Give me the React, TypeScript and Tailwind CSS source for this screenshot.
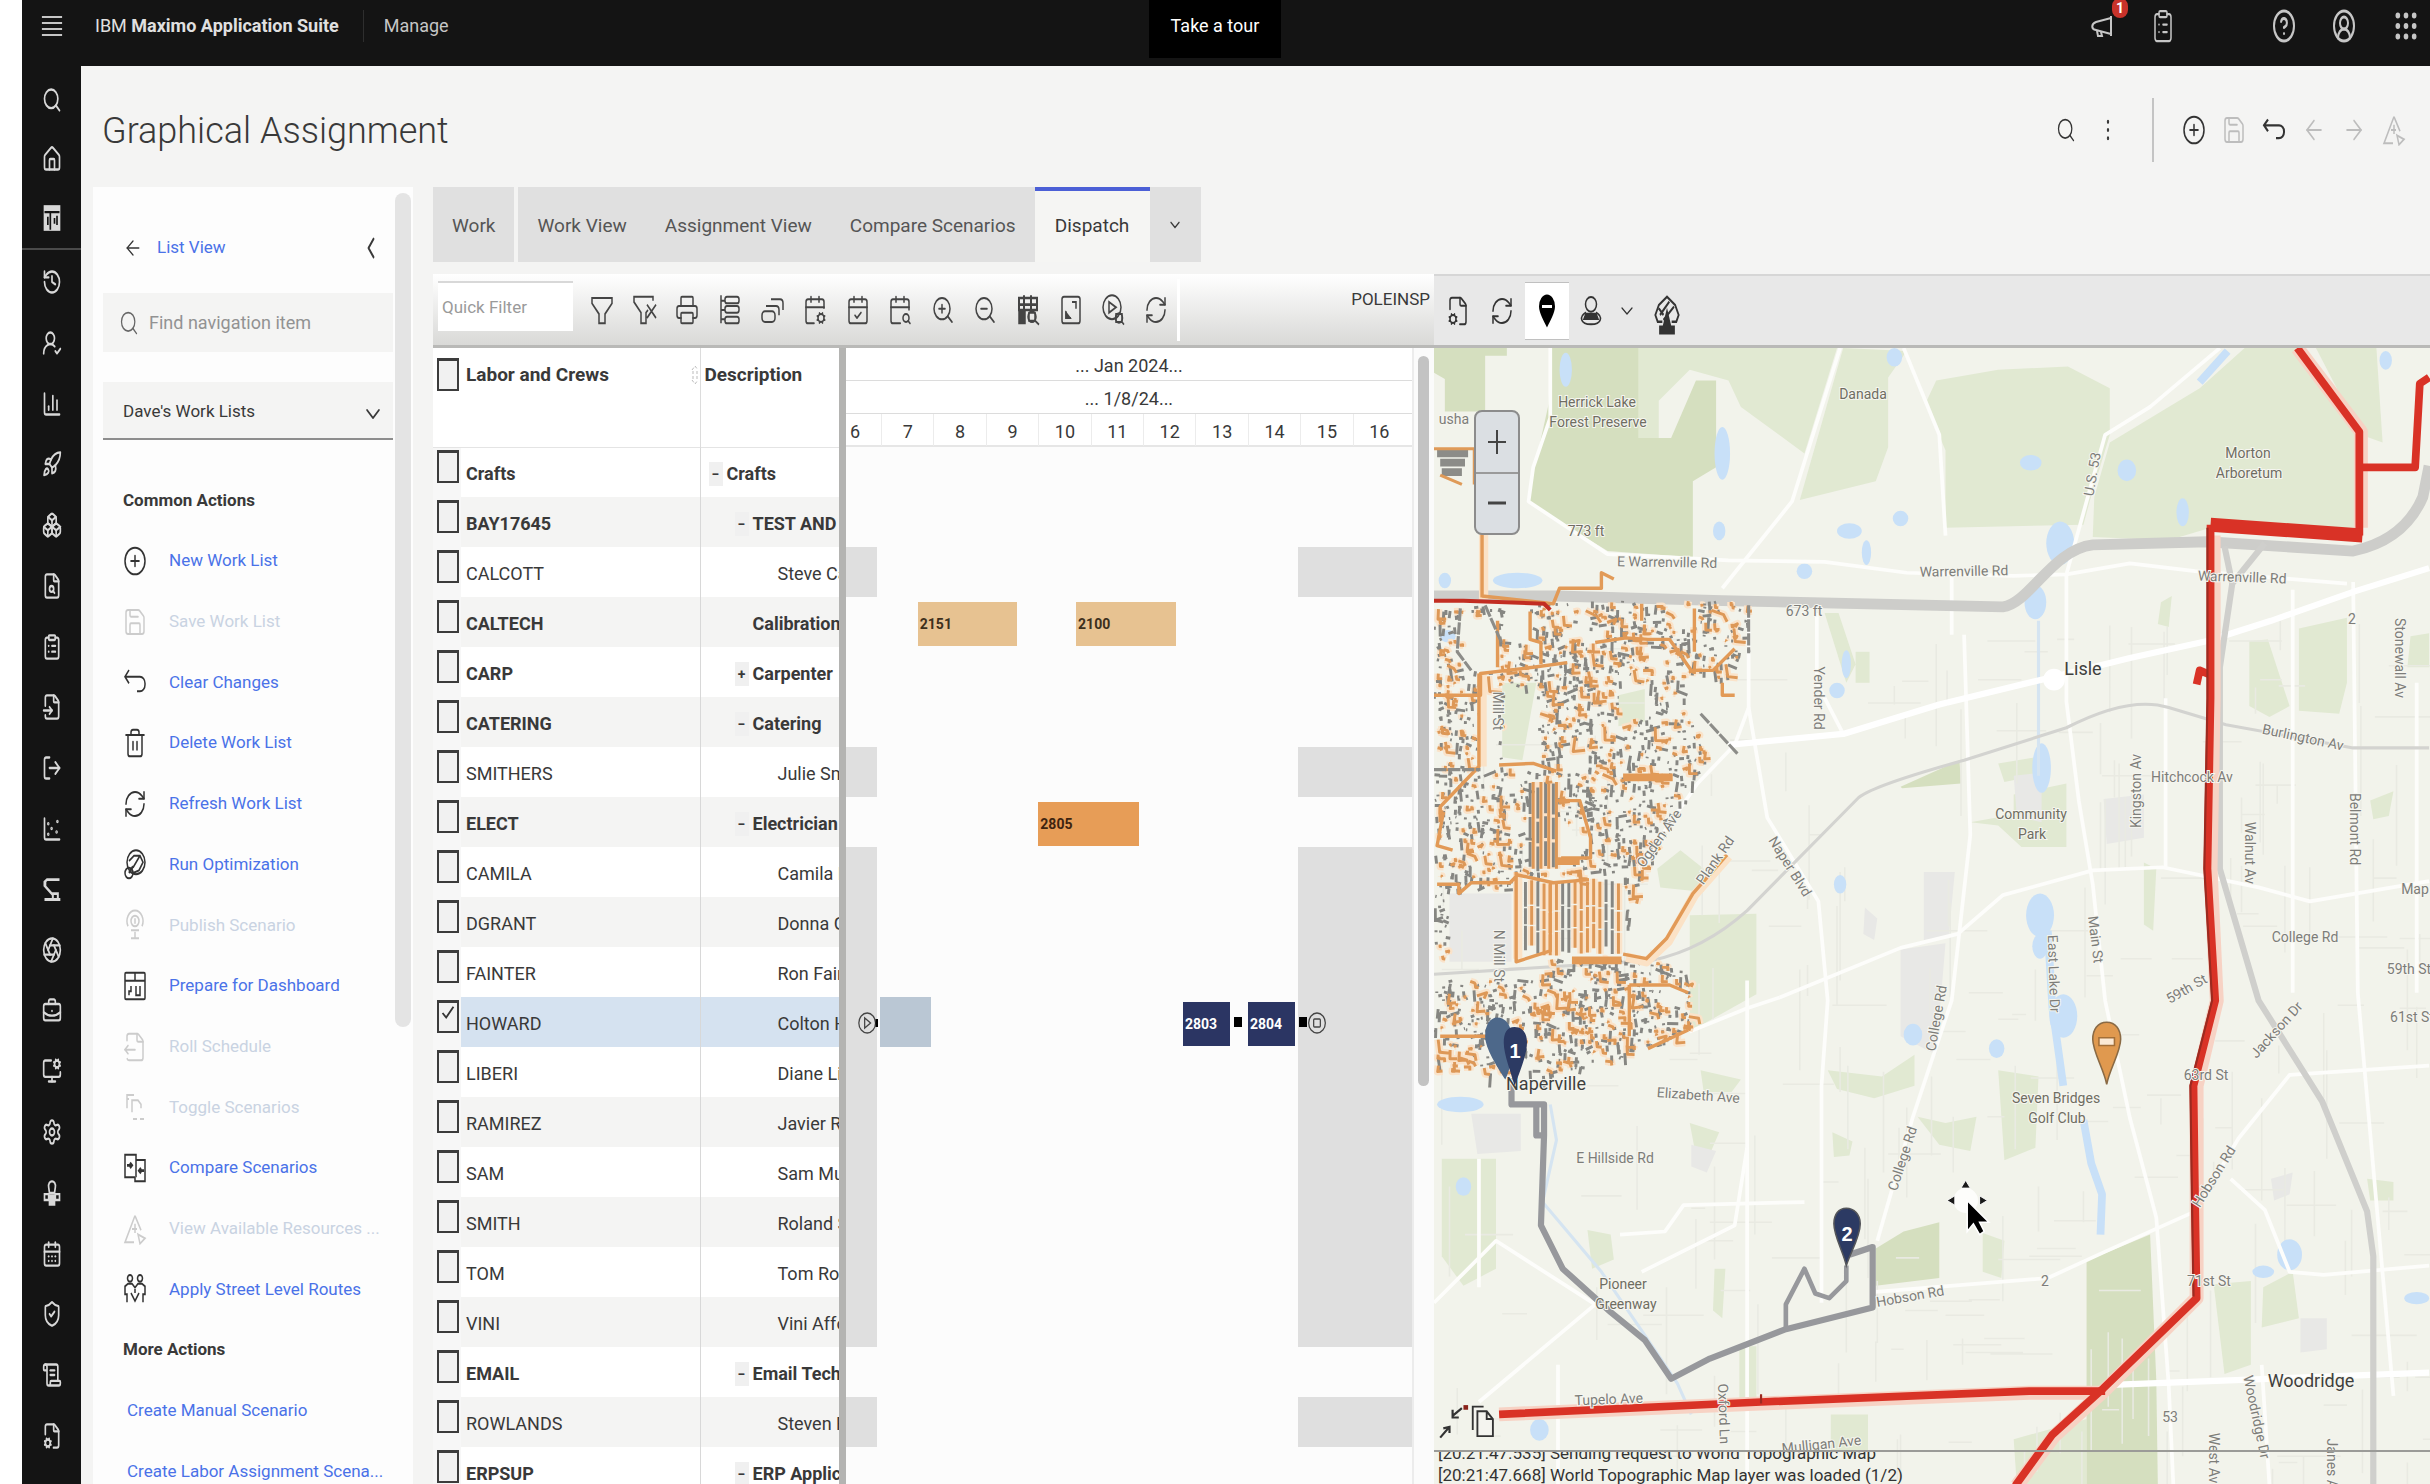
import { useState } from 'react';
import type { FC, ReactNode } from 'react';
import {
  Aperture, ArrowLeft, ArrowRight, Boxes, BriefcaseBusiness, CalendarCheck, CalendarCog, CalendarDays, CalendarSearch,
  ChartColumn, ChartScatter, ChevronDown, ChevronLeft, CirclePlus, CircleQuestionMark, CircleUserRound, ClipboardList,
  EllipsisVertical, FileCog, FileInput, FileOutput, FileSearch, Grip, History, House, LogOut,
  MonitorCog, Printer, RefreshCw, Rocket, Save, ScrollText, Search, Settings, ShieldCheck, Trash2,
  UserRoundCheck, ZoomIn, ZoomOut,
} from 'lucide-react';
import type { LucideIcon } from 'lucide-react';

interface IconProps {
  className?: string;
  strokeWidth?: number;
}

type AnyIcon = LucideIcon | FC<IconProps>;

const Glyph: FC<{ children: ReactNode; className?: string; strokeWidth?: number }> = ({ children, className, strokeWidth = 1.5 }) => (
  <svg viewBox="0 0 24 24" preserveAspectRatio="none" fill="none" stroke="currentColor" strokeWidth={strokeWidth} className={className} aria-hidden="true">
    {children}
  </svg>
);

const Sheet: FC<{ icon: AnyIcon; className: string; strokeWidth?: number }> = ({ icon, className, strokeWidth = 1.5 }) => {
  const Drawn = icon as LucideIcon;
  return <Drawn preserveAspectRatio="none" strokeWidth={strokeWidth} className={className} aria-hidden="true" />;
};

const Bars: FC<IconProps> = (p) => (
  <Glyph {...p}>
    <path d="M1 3h22M1 9h22M1 15h22M1 21h22" />
  </Glyph>
);

const Horn: FC<IconProps> = (p) => (
  <Glyph {...p}>
    <path d="M21 2v20M21 4L6 8c-5 2-5 7 0 8l15 4M7 17l1 5h4l-1-4" />
  </Glyph>
);

const Undo: FC<IconProps> = (p) => (
  <Glyph {...p}>
    <path d="M6 3L2 8l4 5M2 8h15a5 5 0 0 1 5 5v1a5 5 0 0 1-5 5h-3" />
  </Glyph>
);

const Filter: FC<IconProps> = (p) => (
  <Glyph {...p}>
    <path d="M2 3h20v4l-7 8v7H9v-7L2 7z" />
  </Glyph>
);

const FilterClear: FC<IconProps> = (p) => (
  <Glyph {...p}>
    <path d="M20 5V2H1v4l7 8v8h5v-8l2-2M14 8l9 10M23 8l-9 10" />
  </Glyph>
);

const DashTable: FC<IconProps> = (p) => (
  <Glyph {...p}>
    <rect x="3" y="2" width="18" height="20" fill="currentColor" />
    <path d="M3 7h18M10 7v15M15 12v5M7 11v7M18 10v8" stroke="#141414" />
  </Glyph>
);

const RobotArm: FC<IconProps> = (p) => (
  <Glyph {...p}>
    <path d="M21 4H6L3 6v3l10 8M3 21h19M13 20v-4h6v4M4 6v4" strokeWidth="2.4" />
  </Glyph>
);

const CloudUser: FC<IconProps> = (p) => (
  <Glyph {...p}>
    <path d="M12 2a4 4 0 0 0-4 5l1 5h6l1-5a4 4 0 0 0-4-5zM3 13h5v5H3zM16 13h5v5h-5z" />
    <path d="M9 14h6v8H9z" fill="currentColor" />
  </Glyph>
);

const RowTree: FC<IconProps> = (p) => (
  <Glyph {...p}>
    <path d="M3 1v21M3 5h4M3 12h4M3 19h4" />
    <rect x="7" y="2" width="14" height="5" rx="2" />
    <rect x="7" y="9" width="14" height="5" rx="2" />
    <rect x="7" y="17" width="14" height="5" rx="2" />
  </Glyph>
);

const Stack: FC<IconProps> = (p) => (
  <Glyph {...p}>
    <rect x="1" y="13" width="13" height="8" rx="3" />
    <path d="M5 9h10q3 0 3 3v4M10 4h9q3 0 3 3v5" />
  </Glyph>
);

const CalendarZoom: FC<IconProps> = (p) => (
  <Glyph {...p}>
    <path d="M3 3h18v9H3zM3 8h18M8 1v11M15 1v11" strokeWidth="2" />
    <path d="M3 12h6v10H3z" fill="currentColor" />
    <circle cx="16" cy="17" r="4" />
    <path d="M13 14h6v6h-6zM19 20l4 3" />
  </Glyph>
);

const FitView: FC<IconProps> = (p) => (
  <Glyph {...p}>
    <rect x="3" y="2" width="18" height="20" rx="2" />
    <path d="M13 6h4v5M7 13v5h5" />
    <path d="M7 14v4h4z" fill="currentColor" />
  </Glyph>
);

const PlaySearch: FC<IconProps> = (p) => (
  <Glyph {...p}>
    <circle cx="11" cy="10" r="9" />
    <path d="M8 6v8l7-4z" />
    <circle cx="18" cy="18" r="3.5" />
    <path d="M15 15h6v6h-6zM20 20l3 3" />
  </Glyph>
);

const Optimize: FC<IconProps> = (p) => (
  <Glyph {...p}>
    <circle cx="13" cy="10" r="9" />
    <path d="M6 9l5-4h6l3 5-4 6-6 2M17 5l-7 9" />
    <circle cx="6" cy="18" r="4" />
    <path d="M6 18l4-5" strokeWidth="2" />
  </Glyph>
);

const Publish: FC<IconProps> = (p) => (
  <Glyph {...p}>
    <path d="M12 22v-5M8 22h8M5 13a8 8 0 1 1 14 0" />
    <circle cx="12" cy="9" r="4" />
    <path d="M8 16h8M12 7v4" />
  </Glyph>
);

const Dashboard: FC<IconProps> = (p) => (
  <Glyph {...p}>
    <rect x="2" y="2" width="20" height="20" rx="1" />
    <path d="M2 8h20M12 2v6M8 12v4H6v3M13 12v7h4v-7" />
  </Glyph>
);

const Toggle: FC<IconProps> = (p) => (
  <Glyph {...p}>
    <path d="M4 13V3h7M9 16V7h6l3 3v3M10 21h4M17 21h4M4 6h2" />
  </Glyph>
);

const Compare: FC<IconProps> = (p) => (
  <Glyph {...p}>
    <path d="M12 19H2V2h11v17M13 6h9v16H12v-3" />
    <path d="M4 10h5M7 8l2 2-2 2M21 14h-5M18 12l-2 2 2 2" strokeWidth="2" />
  </Glyph>
);

const Resources: FC<IconProps> = (p) => (
  <Glyph {...p}>
    <path d="M12 2L2 22h9M12 2l6 11M12 8v7M15 16l7 3-5 4zM9 12h5" />
  </Glyph>
);

const Routes: FC<IconProps> = (p) => (
  <Glyph {...p}>
    <circle cx="7" cy="4" r="2.5" />
    <circle cx="17" cy="4" r="2.5" />
    <path d="M4 22v-6H2v-6l3-2h4l3 3 3-3h4l3 2v6h-2v6M8 15l4 6 4-6M12 12v3" />
  </Glyph>
);

const PinSolid: FC<IconProps> = (p) => (
  <Glyph {...p}>
    <path d="M12 1a8 8 0 0 0-8 8c0 4 5 10 8 14 3-4 8-10 8-14a8 8 0 0 0-8-8z" fill="currentColor" stroke="none" />
    <path d="M7 8h10v2H7z" fill="#fff" stroke="none" />
  </Glyph>
);

const Person: FC<IconProps> = (p) => (
  <Glyph {...p}>
    <circle cx="12" cy="7" r="5.5" />
    <path d="M7 13c-7 3-6 9 5 9s12-6 5-9" />
    <path d="M7 14h10l2 4H5z" fill="currentColor" />
  </Glyph>
);

const Tower: FC<IconProps> = (p) => (
  <Glyph {...p}>
    <path d="M8 16H4l-2-4 3-6 7-5 7 5 3 6-2 4h-4M6 12l8-8M9 15l9-8M5 8l4 4" />
    <path d="M12 10l3 9h3v4H6v-4h3z" fill="currentColor" />
  </Glyph>
);

const railTop: AnyIcon[] = [Search, House, DashTable];
const railMain: AnyIcon[] = [
  History, UserRoundCheck, ChartColumn, Rocket, Boxes, FileSearch, ClipboardList, FileInput, LogOut, ChartScatter,
  RobotArm, Aperture, BriefcaseBusiness, MonitorCog, Settings, CloudUser, CalendarDays, ShieldCheck, ScrollText, FileCog,
];

interface Action {
  label: string;
  icon: AnyIcon;
  disabled?: boolean;
}

const commonActions: Action[] = [
  { label: 'New Work List', icon: CirclePlus },
  { label: 'Save Work List', icon: Save, disabled: true },
  { label: 'Clear Changes', icon: Undo },
  { label: 'Delete Work List', icon: Trash2 },
  { label: 'Refresh Work List', icon: RefreshCw },
  { label: 'Run Optimization', icon: Optimize },
  { label: 'Publish Scenario', icon: Publish, disabled: true },
  { label: 'Prepare for Dashboard', icon: Dashboard },
  { label: 'Roll Schedule', icon: FileOutput, disabled: true },
  { label: 'Toggle Scenarios', icon: Toggle, disabled: true },
  { label: 'Compare Scenarios', icon: Compare },
  { label: 'View Available Resources ...', icon: Resources, disabled: true },
  { label: 'Apply Street Level Routes', icon: Routes },
];

const tabs = ['Work', 'Work View', 'Assignment View', 'Compare Scenarios', 'Dispatch'];

const ganttTools: { label: string; icon: AnyIcon }[] = [
  { label: 'Filter', icon: Filter },
  { label: 'Clear filter', icon: FilterClear },
  { label: 'Print', icon: Printer },
  { label: 'Rows', icon: RowTree },
  { label: 'Stack', icon: Stack },
  { label: 'Calendar settings', icon: CalendarCog },
  { label: 'Calendar check', icon: CalendarCheck },
  { label: 'Calendar search', icon: CalendarSearch },
  { label: 'Zoom in', icon: ZoomIn },
  { label: 'Zoom out', icon: ZoomOut },
  { label: 'Zoom to dates', icon: CalendarZoom },
  { label: 'Fit', icon: FitView },
  { label: 'Find task', icon: PlaySearch },
  { label: 'Refresh', icon: RefreshCw },
];

interface Bar {
  id: string;
  from: number;
  to: number;
  tone: 'sand' | 'orange' | 'navy';
}

interface Resource {
  name: string;
  description: string;
  level: 0 | 1 | 2;
  toggle?: '−' | '+';
  bars?: Bar[];
}

const resources: Resource[] = [
  { name: 'Crafts', description: 'Crafts', level: 0, toggle: '−' },
  { name: 'BAY17645', description: 'TEST AND', level: 1, toggle: '−' },
  { name: 'CALCOTT', description: 'Steve Calcott', level: 2 },
  {
    name: 'CALTECH', description: 'Calibration', level: 1,
    bars: [{ id: '2151', from: 7.7, to: 9.6, tone: 'sand' }, { id: '2100', from: 10.72, to: 12.63, tone: 'sand' }],
  },
  { name: 'CARP', description: 'Carpenter', level: 1, toggle: '+' },
  { name: 'CATERING', description: 'Catering', level: 1, toggle: '−' },
  { name: 'SMITHERS', description: 'Julie Smithers', level: 2 },
  { name: 'ELECT', description: 'Electrician', level: 1, toggle: '−', bars: [{ id: '2805', from: 10, to: 11.92, tone: 'orange' }] },
  { name: 'CAMILA', description: 'Camila H', level: 2 },
  { name: 'DGRANT', description: 'Donna Grant', level: 2 },
  { name: 'FAINTER', description: 'Ron Fainter', level: 2 },
  {
    name: 'HOWARD', description: 'Colton Howard', level: 2,
    bars: [{ id: '2803', from: 12.76, to: 13.66, tone: 'navy' }, { id: '2804', from: 14, to: 14.9, tone: 'navy' }],
  },
  { name: 'LIBERI', description: 'Diane Liberi', level: 2 },
  { name: 'RAMIREZ', description: 'Javier Ramirez', level: 2 },
  { name: 'SAM', description: 'Sam Murphy', level: 2 },
  { name: 'SMITH', description: 'Roland Smith', level: 2 },
  { name: 'TOM', description: 'Tom Rowe', level: 2 },
  { name: 'VINI', description: 'Vini Affonso', level: 2 },
  { name: 'EMAIL', description: 'Email Technician', level: 1, toggle: '−' },
  { name: 'ROWLANDS', description: 'Steven Rowlands', level: 2 },
  { name: 'ERPSUP', description: 'ERP Application', level: 1, toggle: '−' },
];

const hours = [7, 8, 9, 10, 11, 12, 13, 14, 15, 16];
const FIRST_HOUR = 6.33;
const HOUR_SPAN = 10.8;
const hourLeft = (h: number): string => `${((h - FIRST_HOUR) / HOUR_SPAN) * 100}%`;
const hourWidth = (from: number, to: number): string => `${((to - from) / HOUR_SPAN) * 100}%`;

const barTone: Record<Bar['tone'], string> = {
  sand: 'bg-[#e7c291] text-[#3d2f1c]',
  orange: 'bg-[#e79d57] text-[#3d2410]',
  navy: 'bg-[#2b3563] text-white',
};

const indent: Record<Resource['level'], string> = { 0: 'pl-2', 1: 'pl-[34px]', 2: 'pl-[77px]' };

// ---- map drawing ----

const MAP_X = 926;
const MAP_Y = 224;
const MAP_SCALE = 1.55;

const network: [number, number][] = [
  [926, 391], [1000, 389], [1040, 385], [1130, 388], [1130, 418], [1112, 440], [1095, 432], [1085, 440], [1094, 470], [1104, 488],
  [1092, 505], [1086, 525], [1070, 548], [1056, 575], [1048, 612], [1055, 620], [1091, 622], [1091, 664], [1060, 680], [1020, 690],
  [990, 695], [926, 688],
];

const holes: [number, number, number, number][] = [
  [943, 396, 24, 36], [970, 390, 16, 20], [956, 438, 12, 56], [970, 442, 23, 52], [1045, 440, 18, 22], [1008, 476, 16, 22],
  [934, 574, 44, 48], [1006, 532, 16, 22], [970, 500, 11, 12], [978, 564, 71, 54], [926, 618, 70, 14], [1072, 632, 14, 16], [972, 520, 12, 18],
  [986, 500, 20, 62], [926, 538, 14, 12], [1076, 388, 16, 16], [1064, 418, 12, 20],
];

const inside = (x: number, y: number): boolean => {
  let hit = false;
  for (let i = 0, j = network.length - 1; i < network.length; j = i++) {
    const [xi, yi] = network[i];
    const [xj, yj] = network[j];
    if (yi > y !== yj > y && x < ((xj - xi) * (y - yi)) / (yj - yi) + xi) hit = !hit;
  }
  return hit && !holes.some(([hx, hy, w, h]) => x > hx && x < hx + w && y > hy && y < hy + h);
};

const createRandom = (start: number) => {
  let seed = start;
  return (): number => {
    seed = (seed * 1664525 + 1013904223) % 4294967296;
    return seed / 4294967296;
  };
};

// each city block gets its own street direction and share of orange lines
const blockNoise = (x: number, y: number, salt: number): number => {
  const n = Math.sin(Math.floor(x / 13) * 127.1 + Math.floor(y / 15) * 311.7 + salt) * 43758.5453;
  return n - Math.floor(n);
};

const buildNetwork = (): { poles: string; lines: string } => {
  const random = createRandom(20240108);
  let poles = '';
  let lines = '';
  for (let y = 388; y < 694; y += 3.5) {
    for (let x = 927; x < 1132; x += 3.5) {
      const px = x + random() * 5 - 2;
      const py = y + random() * 5 - 2;
      const pick = random();
      const turn = random();
      const len = 0.8 + random() * random() * 8;
      if (!inside(px, py)) continue;
      const vertical = turn < 0.25 + blockNoise(px, py, 0) * 0.6;
      const tilt = (random() - 0.5) * len * 0.9;
      const dx = vertical ? tilt * 0.5 : len * 0.9;
      const dy = vertical ? len * 1.2 : tilt;
      const step = `M${px.toFixed(1)} ${py.toFixed(1)}l${dx.toFixed(1)} ${dy.toFixed(1)}`;
      const orange = 0.08 + blockNoise(px, py, 9) * 0.26;
      if (pick < orange) lines += `${step}l${(dy * 0.8).toFixed(1)} ${(dx * 0.6).toFixed(1)}`;
      else if (pick < 0.4 + blockNoise(px, py, 4) * 0.45) poles += step;
    }
  }
  for (let x = 981; x < 1047; x += 4) {
    const line = `M${x} ${566 + random() * 4}v${14 + random() * 6}m0 1v${10 + random() * 5}m0 1v${12 + random() * 4}`;
    if (random() < 0.42) lines += line;
    else poles += line;
  }
  for (let x = 988; x < 1005; x += 5) {
    poles += `M${x} ${504 + random() * 4}v20m0 2v14m0 2v16`;
    lines += `M${x + 2} 504v56`;
  }
  return { poles, lines };
};

const buildStreets = (): string => {
  const random = createRandom(77);
  let d = '';
  for (let i = 0; i < 260; i++) {
    const x = 930 + random() * 636;
    const y = 400 + random() * 550;
    const len = 12 + random() * 60;
    d += random() < 0.6 ? `M${x.toFixed(0)} ${y.toFixed(0)}v${len.toFixed(0)}` : `M${x.toFixed(0)} ${y.toFixed(0)}h${(len * 0.6).toFixed(0)}`;
  }
  return d;
};

const grid = buildNetwork();
const streets = buildStreets();

const parksDark = [
  '926,224 973,224 973,229 959,229 959,265 945,265 933,265 933,244 926,240',
  '1001,224 1058,224 1058,282 1079,282 1095,245 1108,245 1108,301 1093,310 1093,359 1038,355 986,323 1000,260',
  '1211,805 1229,794 1252,788 1252,824 1211,829',
  '1347,813 1388,796 1392,890 1393,958 1347,958',
  '1227,507 1265,490 1266,505 1228,508',
];

const parksLight = [
  '1058,224 1186,224 1165,292 1124,262 1116,245 1091,238 1071,258 1071,282 1058,282',
  '1190,224 1231,226 1219,243 1219,288 1211,310 1162,322',
  '1250,245 1290,238 1335,236 1362,250 1362,280 1349,323 1345,338 1256,340 1256,290 1243,260',
  '1449,224 1482,224 1523,277 1523,340 1427,340 1400,348 1351,346 1352,320 1362,285 1420,250',
  '1495,224 1534,224 1538,285 1524,280',
  '1091,590 1134,589 1134,641 1091,665',
  '931,747 966,747 966,818 945,829 931,810',
  '1178,395 1187,395 1198,428 1192,440',
  '1198,420 1207,420 1207,440 1198,440',
  '1272,530 1300,525 1300,512 1334,505 1334,546 1305,546 1290,532',
  '1290,492 1314,488 1314,500 1294,504',
  '1452,413 1464,412 1478,455 1465,462 1452,455',
  '1484,405 1515,398 1515,440 1510,460 1484,458',
  '1429,828 1453,826 1453,880 1436,886',
  '1461,830 1480,820 1484,850 1460,856',
  '1070,560 1085,548 1100,560 1100,575 1072,572',
  '970,440 992,440 983,490 970,488',
  '1045,448 1062,444 1062,465 1045,468',
  '1091,724 1110,730 1104,744 1094,740',
  '1107,818 1114,818 1112,850 1106,845',
  '1123,868 1134,868 1134,905 1123,905',
  '1025,793 1040,796 1042,812 1028,818',
  '1183,730 1196,736 1194,745 1184,746',
  '1280,795 1294,800 1292,824 1280,820',
  '1180,690 1215,694 1236,680 1236,700 1210,708 1186,702',
  '1238,720 1256,724 1276,720 1272,742 1252,738',
  '1290,690 1316,694 1314,740 1294,748',
  '1300,928 1347,915 1347,958 1302,958',
  '1182,912 1206,912 1206,935 1182,935',
  '1384,556 1392,560 1390,600 1384,596',
  '1528,760 1545,762 1545,774 1530,774',
  '1556,410 1568,408 1568,430 1554,430',
  '1530,516 1545,510 1542,526 1532,528',
  '1098,690 1124,696 1118,704 1100,704',
  '1395,388 1402,384 1400,404 1393,402',
];

const blocks = [
  '1242,562 1262,562 1258,604 1242,606', '1227,612 1256,608 1250,680 1227,668', '936,576 976,576 976,620 936,620',
  '950,718 982,718 982,742 954,744', '1358,515 1384,512 1384,540 1360,544', '1092,738 1108,742 1102,756 1092,752',
  '1204,585 1212,592 1210,606 1203,602', '1300,500 1318,498 1318,530 1302,526', '1485,850 1502,850 1502,870 1485,872',
  '1466,760 1480,756 1478,770 1468,774',
];

const waters: [number, number, number, number][] = [
  [1011, 238, 4, 11], [1112, 292, 5, 17], [1223, 230, 5, 6], [1311, 298, 7, 5], [1373, 303, 6, 7], [1110, 342, 4, 6], [1165, 368, 5, 5],
  [1194, 342, 8, 5], [1205, 356, 3, 8], [1227, 334, 5, 5], [1330, 350, 9, 14], [1314, 388, 7, 11], [980, 374, 16, 5], [1318, 495, 6, 16],
  [1192, 428, 3, 9], [1186, 445, 5, 5], [1317, 590, 9, 14], [1317, 610, 5, 8], [1188, 570, 4, 6], [1235, 667, 6, 7], [1289, 676, 5, 6],
  [1332, 655, 9, 14], [1478, 809, 8, 10], [1461, 820, 7, 4], [1560, 837, 8, 4], [943, 712, 15, 5], [945, 765, 5, 6], [935, 410, 5, 4],
  [933, 374, 4, 5], [994, 922, 6, 7], [1540, 232, 4, 6], [1409, 330, 4, 9],
];

const roads = [
  'M1001 224V269L990 301L987 323L1038 357L1116 361L1178 362L1231 369L1300 371L1334 370L1375 363L1417 368L1515 376',
  'M1188 224L1157 323L1112 379',
  'M1229 224L1252 280L1256 345',
  'M1433 224L1388 262L1359 280L1347 323L1334 370V452L1342 516L1351 570L1359 645L1375 721L1392 785L1400 893L1403 958',
  'M1129 392V456L1120 480L1096 505L1058 560',
  'M1129 456L1141 527L1174 581L1180 645L1176 700V840',
  'M1149 643L1227 611L1264 602L1293 577L1351 561L1396 559L1458 572L1491 581L1568 568',
  'M1268 409L1272 538L1260 645L1235 720L1212 800',
  'M1519 375L1522 640L1545 900',
  'M1211 833L1322 824L1359 807L1417 781L1445 734L1478 693L1568 687',
  'M1165 775L1087 777L1075 794L1046 796',
  'M926 840L966 800L1030 841L955 904',
  'M1128 632V958',
  'M1173 395V440L1190 473',
  'M1480 380V640M1560 440V640M1398 450V560',
  'M1091 665L1128 650L1149 643',
  'M1440 760L1462 780L1478 820L1500 822L1568 816',
  'M1260 370V409M1060 820L1120 790L1128 740',
  'M955 747V830M1006 880V958M1460 880L1465 958',
];

interface MapLabel {
  text: string;
  x: number;
  y: number;
  rotate?: number;
  kind?: 'town' | 'park';
}

const mapLabels: MapLabel[] = [
  { text: 'Herrick Lake', x: 1031, y: 262, kind: 'park' },
  { text: 'Forest Preserve', x: 1032, y: 275, kind: 'park' },
  { text: 'Danada', x: 1203, y: 257, kind: 'park' },
  { text: 'Morton', x: 1451, y: 295, kind: 'park' },
  { text: 'Arboretum', x: 1452, y: 308, kind: 'park' },
  { text: 'usha', x: 939, y: 273 },
  { text: '773 ft', x: 1024, y: 345, kind: 'park' },
  { text: 'E Warrenville Rd', x: 1076, y: 365, rotate: 1 },
  { text: 'Warrenville Rd', x: 1268, y: 371, rotate: -1 },
  { text: 'Warrenville Rd', x: 1447, y: 375, rotate: 2 },
  { text: '673 ft', x: 1165, y: 397 },
  { text: 'Lisle', x: 1345, y: 435, kind: 'town' },
  { text: '2', x: 1518, y: 402 },
  { text: 'Burlington Av', x: 1486, y: 478, rotate: 12 },
  { text: 'Hitchcock Av', x: 1415, y: 504 },
  { text: 'Community', x: 1311, y: 528, kind: 'park' },
  { text: 'Park', x: 1312, y: 541, kind: 'park' },
  { text: 'College Rd', x: 1488, y: 607 },
  { text: '59th St', x: 1555, y: 628 },
  { text: '61st St', x: 1557, y: 659 },
  { text: 'Yender Rd', x: 1171, y: 450, rotate: 90 },
  { text: 'Mill St', x: 964, y: 458, rotate: 90 },
  { text: 'N Mill St', x: 965, y: 616, rotate: 90 },
  { text: 'Kingston Av', x: 1382, y: 510, rotate: -90 },
  { text: 'Walnut Av', x: 1449, y: 550, rotate: 90 },
  { text: 'Belmont Rd', x: 1517, y: 534, rotate: 90 },
  { text: 'Stonewall Av', x: 1546, y: 424, rotate: 90 },
  { text: 'Naper Blvd', x: 1153, y: 560, rotate: 58 },
  { text: 'Ogden Ave', x: 1074, y: 542, rotate: -55 },
  { text: 'Plank Rd', x: 1110, y: 556, rotate: -55 },
  { text: 'Main St', x: 1350, y: 606, rotate: 83 },
  { text: 'East Lake Dr', x: 1323, y: 628, rotate: 88 },
  { text: 'College Rd', x: 1253, y: 657, rotate: -80 },
  { text: 'College Rd', x: 1231, y: 748, rotate: -72 },
  { text: '59th St', x: 1413, y: 640, rotate: -30 },
  { text: 'Jackson Dr', x: 1472, y: 666, rotate: -48 },
  { text: '63rd St', x: 1424, y: 696 },
  { text: 'Hobson Rd', x: 1432, y: 760, rotate: -58 },
  { text: '71st St', x: 1426, y: 829 },
  { text: 'Hobson Rd', x: 1234, y: 839, rotate: -10 },
  { text: '2', x: 1320, y: 829 },
  { text: 'U.S. 53', x: 1354, y: 306, rotate: -80 },
  { text: 'Map', x: 1559, y: 576 },
  { text: 'Seven Bridges', x: 1327, y: 711, kind: 'park' },
  { text: 'Golf Club', x: 1328, y: 724, kind: 'park' },
  { text: 'Elizabeth Ave', x: 1096, y: 709, rotate: 4 },
  { text: 'E Hillside Rd', x: 1043, y: 750 },
  { text: 'Pioneer', x: 1048, y: 831, kind: 'park' },
  { text: 'Greenway', x: 1050, y: 844, kind: 'park' },
  { text: 'Tupelo Ave', x: 1039, y: 905, rotate: -2 },
  { text: 'Naperville', x: 998, y: 703, kind: 'town' },
  { text: 'Woodridge', x: 1492, y: 894, kind: 'town' },
  { text: '53', x: 1401, y: 917 },
  { text: 'Woodridge Dr', x: 1454, y: 914, rotate: 78 },
  { text: 'Janes Av', x: 1502, y: 946, rotate: 90 },
  { text: 'West Av', x: 1426, y: 940, rotate: 90 },
  { text: 'Oxford Ln', x: 1110, y: 912, rotate: 88 },
  { text: 'Mulligan Ave', x: 1176, y: 934, rotate: -6 },
];

const DispatchMap: FC = () => (
  <svg viewBox="0 0 996 1136" preserveAspectRatio="xMinYMin slice" className="block h-full w-full" role="img" aria-label="Dispatch map">
    <rect width="996" height="1136" fill="#f2f3eb" />
    <g transform={`scale(${MAP_SCALE}) translate(${-MAP_X} ${-MAP_Y})`} fill="none" strokeLinejoin="round">
      {parksLight.map((points) => <polygon key={points} points={points} fill="#e1e9d2" />)}
      {parksDark.map((points) => <polygon key={points} points={points} fill="#d5dfbf" />)}
      {blocks.map((points) => <polygon key={points} points={points} fill="#e8e8e6" />)}
      <path d={streets} stroke="#e9eae2" strokeWidth="1" />
      {waters.map(([x, y, rx, ry]) => <ellipse key={`${x}-${y}`} cx={x} cy={y} rx={rx} ry={ry} fill="#c8e0f8" />)}
      <path d="M1438 226L1420 246" stroke="#c8e0f8" strokeWidth="5" />
      <path d="M1345 722L1350 750L1357 770L1356 796M1322 600L1325 650L1332 700" stroke="#c8e0f8" strokeWidth="5" />
      <path d="M1316 400V500M1001 712L1005 735L996 775L1034 820L1058 855L1083 892L1092 912" stroke="#d5e4f1" strokeWidth="2" />

      {roads.map((d) => <path key={d} d={d} stroke="#fdfdfb" strokeWidth="2.4" />)}
      <path d="M1116 480L1190 473L1252 454L1322 437L1375 424L1425 413L1466 400L1520 381L1568 366M1363 893L1568 885" stroke="#fff" strokeWidth="4" />
      <circle cx="1326" cy="438" r="7" fill="#fff" />
      <path d="M926 628L1067 619Q1100 612 1128 587L1200 514Q1210 506 1268 490L1334 469Q1375 448 1400 456L1437 467L1519 482H1568" stroke="#d3d3d0" strokeWidth="2" />
      <path d="M926 384H1005L1112 387L1293 391C1310 389 1325 354 1351 351L1425 349L1519 355Q1552 348 1564 320L1568 300" stroke="#cdcdca" strokeWidth="7" />
      <path d="M1462 350L1441 376L1433 430V560L1458 645L1499 710L1528 781L1532 810V958M1436 352L1441 376" stroke="#cfcfcc" strokeWidth="4" />

      <path d={grid.lines} stroke="#fae3ca" strokeWidth="5" />
      <path d={grid.poles} stroke="#868682" strokeWidth="1.9" />
      <path d={grid.lines} stroke="#dd9857" strokeWidth="1.9" />
      <g stroke="#fbe2c6" strokeWidth="6">
        <path d="M1050 617L1063 620L1077 607L1094 577L1116 552M958 344V386M957 434V494M980 562V618" />
      </g>
      <g stroke="#e29a57" strokeWidth="2.2">
        <path d="M1048 615L1063 618L1076 605L1093 576L1115 551" />
        <path d="M957 344V385M957 384L1003 389L1007 379H1034V369L1042 373" />
        <path d="M926 448H956V434L990 430L1012 427M968 493L990 492L1005 497M955 434V494L930 520V530" />
        <path d="M928 570H942V576L950 569H975L980 564L1003 569L1026 567M979 562V620L1001 613V570" />
        <path d="M1005 516H1020L1027 540V553H1008M967 400V430M988 394V412L995 414V428" />
        <path d="M1030 414L1050 411L1064 412L1078 412L1092 432H1106L1120 418M1094 392V420M1060 389V400" />
        <path d="M1052 635H1078L1090 640M1052 635V668M1064 676L1090 664M930 668H975M932 524L928 545L938 548" />
        <path d="M1112 440V448H1120" />
      </g>
      <path d="M1015 619H1047M1048 501H1080M1005 555H1020" stroke="#e29a57" strokeWidth="5" />
      <path d="M943 392L941 420L950 432M959 390L970 415M1129 390V421M1098 460L1122 486M926 496H956" stroke="#8c8c88" strokeWidth="2" strokeDasharray="8 1" />
      <path d="M928 292H948M930 298H946M931 304H944" stroke="#8c8c88" strokeWidth="5" />
      <path d="M926 289H952V312M930 306L944 312" stroke="#df9a58" strokeWidth="2" />
      <path d="M926 387H945L997 389L1001 393" stroke="#c22d22" strokeWidth="2.6" />

      <path d="M976 695V712H997V732H992V714M997 732L995 790L1009 818L1040 846L1062 864L1079 889L1104 876L1153 857L1209 843V804L1194 809" stroke="#97989c" strokeWidth="4" />
      <path d="M1153 857V841L1165 818L1172 834L1181 837L1192 826V816" stroke="#97989c" strokeWidth="3" />

      <g stroke="#f7d2c4" strokeWidth="9">
        <path d="M1483 224L1524 278V340M1429 345V450L1427 560L1431 645L1418 700V837L1358 897L1326 926L1302 958M968 912L1137 905L1310 898H1359" />
      </g>
      <g stroke="#d93226" strokeWidth="5">
        <path d="M1483 224L1523 278V345M1427 338V450L1425 560L1430 645L1416 700L1417 773L1418 837L1358 895L1325 925L1301 958" />
        <path d="M1525 301H1559L1562 247L1568 243" />
        <path d="M968 912L1137 904L1310 897H1359" />
        <path d="M1418 441L1420 432L1427 435" />
        <path d="M1427 338L1525 345" strokeWidth="9" strokeLinejoin="miter" />
      </g>
      <path d="M1425 340V450L1423 560L1428 645L1414 700L1415 773L1416 836M1137 899V905" stroke="#9c2a20" strokeWidth="1.4" />
    </g>

    <g fontFamily='Roboto, "Liberation Sans", sans-serif' textAnchor="middle" stroke="#f6f6f0" paintOrder="stroke" strokeWidth="2">
      {mapLabels.map((label) => {
        const x = Math.round((label.x - MAP_X) * MAP_SCALE);
        const y = Math.round((label.y - MAP_Y) * MAP_SCALE);
        return (
          <text
            key={`${label.text}-${label.x}`}
            x={x}
            y={y}
            fontSize={label.kind === 'town' ? 18 : 14}
            fill={label.kind === 'town' ? '#3f3f3d' : label.kind === 'park' ? '#6f6d62' : '#7d7d79'}
            transform={label.rotate ? `rotate(${label.rotate} ${x} ${y})` : undefined}
          >
            {label.text}
          </text>
        );
      })}
    </g>

    <g transform={`scale(${MAP_SCALE}) translate(${-MAP_X} ${-MAP_Y})`}>
      <path d="M967 656c-5 0-8 5-8 12 0 8 8 20 13 28 4-8 5-18 4-28 0-7-4-12-9-12z" fill="#4d688a" />
      <path d="M978 662c-5 0-7 4-7 10 0 8 5 20 7 28 3-8 8-20 8-28 0-6-3-10-8-10z" fill="#2c3a63" />
      <path d="M1192 779c-5 0-8 4-8 10 0 8 6 18 8 27 3-9 9-19 9-27 0-6-4-10-9-10z" fill="#2c3a63" stroke="#55565a" strokeWidth="1" />
      <path d="M1360 659c-6 0-9 5-9 11 0 8 7 19 9 29 2-10 9-21 9-29 0-6-3-11-9-11z" fill="#e0994f" stroke="#8a6a45" strokeWidth="1" />
      <path d="M1355 669h10v5h-10z" fill="#fbe9d5" stroke="#a36f38" strokeWidth="1" />
      <circle cx="1269" cy="774" r="8" fill="#fff" opacity=".8" />
      <path d="M1269 761l3 5h-6zM1257 774l5-3v6zM1283 774l-5-3v6z" fill="#1a1a1a" stroke="#fff" strokeWidth=".6" />
      <path d="M1270 774v20l4-5 4 7 3-2-3-6h6z" fill="#000" stroke="#fff" strokeWidth="1" />
      <path d="M930 927l6-7M932 921l4-1v4M944 908l-6 5M938 909v5h4" fill="none" stroke="#333" strokeWidth="1.4" />
      <path d="M945 906h3v3h-3z" fill="#8a231b" />
      <path d="M954 910h6l4 5v11h-10zM960 910v5h4M951 922v-15h7" fill="#f4f4ef" stroke="#333" strokeWidth="1.2" />
    </g>
    <g fontFamily='"Liberation Sans", sans-serif' fontWeight="700" fontSize="20" fill="#fff" textAnchor="middle">
      <text x="81" y="710">1</text>
      <text x="413" y="893">2</text>
    </g>
  </svg>
);

// ---- page ----

const ActionRow: FC<{ action: Action }> = ({ action }) => (
  <li className="flex flex-1 items-center">
    <a
      href="#"
      aria-disabled={action.disabled}
      className={`flex items-center gap-[22px] whitespace-nowrap ${action.disabled ? 'text-[#c9d3e2]' : 'text-[#4a72e8]'}`}
    >
      <Sheet icon={action.icon} className={`h-8 w-6 ${action.disabled ? 'text-[#cccccc]' : 'text-[#333333]'}`} />
      {action.label}
    </a>
  </li>
);

const HourBars: FC<{ resource: Resource; selected: boolean }> = ({ resource, selected }) => (
  <div className="relative h-[50px] bg-[#fcfcfc]">
    {resource.level === 2 && (
      <>
        <div className="absolute inset-y-0 left-0 bg-[#dfdfdf]" style={{ width: hourWidth(FIRST_HOUR, 6.93) }} />
        <div className="absolute inset-y-0 right-0 bg-[#dfdfdf]" style={{ left: hourLeft(14.96) }} />
      </>
    )}
    {selected && (
      <>
        <div className="absolute inset-y-0 bg-[#bac7d4]" style={{ left: hourLeft(6.98), width: hourWidth(6.98, 7.95) }} />
        <svg viewBox="0 0 24 24" preserveAspectRatio="none" className="absolute top-3.5 h-6 w-5" style={{ left: hourLeft(6.56) }} fill="none" stroke="#444">
          <circle cx="11" cy="12" r="10" strokeWidth="1.5" />
          <path d="M8 7v10l7-5z" strokeWidth="1.5" />
          <path d="M21 8h3v8h-3z" fill="#000" stroke="none" />
        </svg>
        <div className="absolute top-5 h-[10px] w-2 bg-black" style={{ left: hourLeft(13.74) }} />
        <div className="absolute top-5 h-[10px] w-2 bg-black" style={{ left: hourLeft(14.98) }} />
        <svg viewBox="0 0 24 24" preserveAspectRatio="none" className="absolute top-3.5 h-6 w-5" style={{ left: hourLeft(15.13) }} fill="none" stroke="#444" strokeWidth="1.5">
          <circle cx="12" cy="12" r="10" />
          <rect x="8" y="8" width="8" height="8" rx="1" />
        </svg>
      </>
    )}
    {resource.bars?.map((bar) => (
      <div
        key={bar.id}
        className={`absolute top-[5px] flex h-11 items-center text-sm font-bold ${barTone[bar.tone]} pl-0.5`}
        style={{ left: hourLeft(bar.from), width: hourWidth(bar.from, bar.to) }}
      >
        {bar.id}
      </div>
    ))}
  </div>
);

const App: FC = () => {
  const [activeTab, setActiveTab] = useState<string>('Dispatch');
  const [selected, setSelected] = useState<string[]>(['HOWARD']);

  const toggle = (name: string): void => {
    setSelected((current) => (current.includes(name) ? current.filter((item) => item !== name) : [...current, name]));
  };

  const box = 'peer block h-[33px] w-[22px] appearance-none border-2 border-t-3 border-[#3c3c3c] bg-[#f1f1f1]';

  return (
    <div className="h-screen overflow-hidden bg-white pl-[22px] font-[Roboto,'Liberation_Sans',sans-serif] text-[17px] text-[#393939]">
      <div className="flex h-full flex-col bg-[#f4f4f3]">
        <header className="flex h-[66px] shrink-0 bg-[#141414] text-[#c6c6c6]">
          <div className="flex flex-[1_1_0px] items-center pb-[14px]">
            <button type="button" aria-label="Open menu" className="ml-[19px]">
              <Sheet icon={Bars} className="h-6 w-[22px]" strokeWidth={2} />
            </button>
            <p className="ml-8 text-lg text-[#e0e0e0]">
              IBM <span className="font-bold">Maximo Application Suite</span>
            </p>
            <span className="ml-6 h-8 w-px bg-[#2e2e2e]" />
            <span className="ml-5 text-lg">Manage</span>
          </div>
          <button type="button" className="h-[58px] w-[132px] bg-black pb-1.5 text-lg text-white">Take a tour</button>
          <div className="flex flex-[1_1_22px] items-center justify-end pr-2.5 pb-[14px]">
            <button type="button" aria-label="Announcements" className="relative mr-[37px]">
              <Sheet icon={Horn} className="h-6 w-6" strokeWidth={2} />
              <span className="absolute -top-4 -right-3.5 flex h-5 w-4 items-center justify-center rounded-full bg-[#c8322a] text-sm font-bold text-white">1</span>
            </button>
            <button type="button" aria-label="Tasks" className="mr-[97px]"><Sheet icon={ClipboardList} className="h-9 w-6" /></button>
            <button type="button" aria-label="Help" className="mr-9"><Sheet icon={CircleQuestionMark} className="h-9 w-6" strokeWidth={2} /></button>
            <button type="button" aria-label="Account" className="mr-9"><Sheet icon={CircleUserRound} className="h-9 w-6" strokeWidth={2} /></button>
            <button type="button" aria-label="Switcher"><Sheet icon={Grip} className="h-9 w-7" strokeWidth={2} /></button>
          </div>
        </header>

        <div className="flex min-h-0 flex-1">
          <nav aria-label="Applications" className="flex w-[59px] shrink-0 flex-col bg-[#141414] text-[#d8d8d8]">
            <div className="flex h-[184px] shrink-0 flex-col border-b-2 border-[#4a4a4a] pt-1">
              {railTop.map((icon, i) => (
                <a key={i} href="#" aria-label="Application" className="flex flex-1 items-center justify-center">
                  <Sheet icon={icon} className="h-7 w-5" strokeWidth={2} />
                </a>
              ))}
            </div>
            <div className="flex min-h-0 flex-1 flex-col pt-0.5 pb-[18px]">
              {railMain.map((icon, i) => (
                <a key={i} href="#" aria-label="Application" className="flex flex-1 items-center justify-center">
                  <Sheet icon={icon} className="h-7 w-5" strokeWidth={2} />
                </a>
              ))}
            </div>
          </nav>

          <main className="flex min-w-0 flex-1 flex-col">
            <div className="flex h-[121px] shrink-0 items-center justify-between pr-6 pl-[21px]">
              <h1 className="pt-2 text-4xl leading-[52px] font-light">Graphical Assignment</h1>
              <div className="flex items-center gap-4 pt-1.5 text-[#333333]">
                <button type="button" aria-label="Search"><Sheet icon={Search} className="h-7 w-5" /></button>
                <button type="button" aria-label="More" className="w-8"><Sheet icon={EllipsisVertical} className="mx-auto h-7 w-4" /></button>
                <span className="ml-3 mr-3 h-16 w-0.5 bg-[#c4c4c4]" />
                <button type="button" aria-label="New"><Sheet icon={CirclePlus} className="h-8 w-6" /></button>
                <button type="button" aria-label="Save" className="text-[#bdbdbd]"><Sheet icon={Save} className="h-8 w-6" /></button>
                <button type="button" aria-label="Undo"><Sheet icon={Undo} className="h-7 w-6" strokeWidth={2} /></button>
                <button type="button" aria-label="Previous" className="text-[#bdbdbd]"><Sheet icon={ArrowLeft} className="h-8 w-6" /></button>
                <button type="button" aria-label="Next" className="text-[#bdbdbd]"><Sheet icon={ArrowRight} className="h-8 w-6" /></button>
                <button type="button" aria-label="Resources" className="text-[#bdbdbd]"><Sheet icon={Resources} className="h-8 w-6" /></button>
              </div>
            </div>

            <div className="flex min-h-0 flex-1">
              <aside className="relative ml-3 flex w-80 shrink-0 flex-col bg-[#fdfdfd] pr-5 pl-2.5">
                <div className="absolute top-1.5 right-0.5 h-[834px] w-4 rounded-full bg-[#e4e4e4]" />
                <div className="flex h-[106px] shrink-0 items-center justify-between px-3 pt-4">
                  <a href="#" className="flex items-center gap-3.5 pl-2 text-[#4a72e8]">
                    <Sheet icon={ArrowLeft} className="h-6 w-5 text-[#333333]" />
                    List View
                  </a>
                  <button type="button" aria-label="Collapse"><Sheet icon={ChevronLeft} className="h-9 w-5" strokeWidth={2} /></button>
                </div>
                <label className="flex h-[59px] shrink-0 items-center gap-2.5 bg-[#f4f4f3] px-4">
                  <Sheet icon={Search} className="h-7 w-5 shrink-0 text-[#666666]" />
                  <span className="sr-only">Find navigation item</span>
                  <input type="text" placeholder="Find navigation item" className="h-full w-full min-w-0 bg-transparent text-lg placeholder:text-[#929292]" />
                </label>
                <label className="relative mt-[30px] block shrink-0">
                  <span className="sr-only">Work list</span>
                  <select className="h-[58px] w-full appearance-none border-b-2 border-[#8d8d8d] bg-[#f4f4f3] px-5 pt-1">
                    <option>Dave's Work Lists</option>
                  </select>
                  <Sheet icon={ChevronDown} className="pointer-events-none absolute top-4 right-2 h-8 w-6" />
                </label>
                <ul className="-mb-[18px] mt-[30px] flex flex-1 flex-col pl-5">
                  <li className="flex flex-1 items-center"><h2 className="font-bold">Common Actions</h2></li>
                  {commonActions.map((action) => <ActionRow key={action.label} action={action} />)}
                  <li className="flex flex-1 items-center"><h2 className="font-bold">More Actions</h2></li>
                  <li className="flex flex-1 items-center pl-1"><a href="#" className="text-[#4a72e8]">Create Manual Scenario</a></li>
                  <li className="flex flex-1 items-center pl-1"><a href="#" className="whitespace-nowrap text-[#4a72e8]">Create Labor Assignment Scena...</a></li>
                </ul>
              </aside>

              <section className="ml-5 flex min-w-0 flex-1 flex-col">
                <div role="tablist" className="flex h-[75px] shrink-0">
                  {tabs.map((tab) => (
                    <button
                      key={tab}
                      type="button"
                      role="tab"
                      aria-selected={tab === activeTab}
                      onClick={() => setActiveTab(tab)}
                      className={
                        tab === activeTab
                          ? 'w-[115px] border-t-4 border-[#4b5fd6] bg-[#f5f5f3] text-[19px]'
                          : 'bg-[#e0e0e0] px-[19px] pt-1 text-[19px] text-[#555555] first:border-r-4 first:border-[#f4f4f3]'
                      }
                    >
                      {tab}
                    </button>
                  ))}
                  <button type="button" aria-label="More tabs" className="flex w-[51px] items-center justify-center bg-[#e0e0e0]">
                    <Sheet icon={ChevronDown} className="h-5 w-4" strokeWidth={2} />
                  </button>
                </div>

                <div className="mt-3 grid min-h-0 flex-1 grid-cols-[1001fr_996fr]">
                  <div className="flex min-h-0 min-w-0 flex-col overflow-hidden">
                    <div className="flex h-[74px] shrink-0 items-center border-b-3 border-[#b9b9b7] bg-gradient-to-b from-white to-[#d9d9d7] pl-[5px]">
                      <input
                        type="text"
                        aria-label="Quick Filter"
                        placeholder="Quick Filter"
                        className="mb-2 h-[50px] w-[135px] border-t-2 border-[#d8d8d8] bg-white px-1 placeholder:text-[#9a9a9a]"
                      />
                      <div className="ml-2 flex w-[596px] text-[#444444]">
                        {ganttTools.map((tool) => (
                          <button key={tool.label} type="button" aria-label={tool.label} className="flex flex-1 justify-center">
                            <Sheet icon={tool.icon} className="h-8 w-6" />
                          </button>
                        ))}
                      </div>
                      <span className="h-[62px] w-[3px] bg-white" />
                      <span className="flex-1 pr-1 pb-5 text-right">POLEINSP</span>
                    </div>

                    <div className="flex flex-1 bg-white">
                      <div className="w-[406px] shrink-0 overflow-hidden">
                        <table className="w-full table-fixed border-collapse text-left text-lg">
                          <colgroup>
                            <col className="w-[28px]" />
                            <col className="w-[239px]" />
                            <col />
                          </colgroup>
                          <thead>
                            <tr className="h-[99px] border-b border-[#e4e4e4] align-top text-[19px]">
                              <th className="pt-2.5 pl-1">
                                <input type="checkbox" aria-label="Select all" className={box} />
                              </th>
                              <th className="border-r border-[#dcdcdc] pt-3 pl-[5px] font-bold">
                                <span className="flex items-center justify-between">
                                  Labor and Crews
                                  <svg viewBox="0 0 10 24" className="h-6 w-2.5 text-[#bbbbbb]" fill="none" stroke="currentColor" strokeDasharray="3 2">
                                    <path d="M2 7l3-4 3 4M3 8v8M7 8v8M2 17l3 4 3-4" />
                                  </svg>
                                </span>
                              </th>
                              <th className="pt-3 pl-1 font-bold">Description</th>
                            </tr>
                          </thead>
                          <tbody>
                            {resources.map((resource, i) => {
                              const checked = selected.includes(resource.name);
                              const tone = checked ? 'bg-[#d5e2f0]' : i % 2 === 1 ? 'bg-[#f4f4f3]' : 'bg-white';
                              return (
                                <tr key={resource.name} className={`h-[50px] whitespace-nowrap ${tone} ${resource.level < 2 ? 'font-bold' : ''}`}>
                                  <td className="relative bg-[#f7f7f7] p-0 pb-3 pl-1">
                                    <input
                                      type="checkbox"
                                      aria-label={resource.name}
                                      checked={checked}
                                      onChange={() => toggle(resource.name)}
                                      className={box}
                                    />
                                    <svg viewBox="0 0 14 22" className="pointer-events-none absolute top-1.5 left-2 hidden h-5 w-3.5 peer-checked:block" fill="none" stroke="#333" strokeWidth="2">
                                      <path d="M1 11l4 5 8-12" />
                                    </svg>
                                  </td>
                                  <td className="border-r border-[#d8d8d8] p-0 pt-1 pl-[5px]">{resource.name}</td>
                                  <td className={`overflow-hidden p-0 pt-1 ${indent[resource.level]}`}>
                                    <span className="flex items-center">
                                      {resource.level < 2 && (
                                        <span className="mr-1 flex h-6 w-3.5 shrink-0 justify-center text-sm leading-6">
                                          {resource.toggle && <span className="w-full bg-[#f0f0f0] text-center">{resource.toggle}</span>}
                                        </span>
                                      )}
                                      {resource.description}
                                    </span>
                                  </td>
                                </tr>
                              );
                            })}
                          </tbody>
                        </table>
                      </div>
                      <div className="w-[7px] shrink-0 bg-[#b4b4b2]" />
                      <div className="min-w-0 flex-1">
                        <div className="flex h-[99px] flex-col border-b-2 border-[#e6e6e6] text-lg">
                          <div className="flex flex-1 items-center justify-center border-b border-[#dcdcdc] pt-1">... Jan 2024...</div>
                          <div className="flex flex-1 items-center justify-center border-b border-[#dcdcdc] pt-1">... 1/8/24...</div>
                          <div className="flex flex-1 items-center">
                            <span className="w-[35px] pt-1 pl-1">6</span>
                            {hours.map((hour) => (
                              <span key={hour} className="flex h-full flex-1 items-center justify-center border-l border-[#ececec] pt-1">{hour}</span>
                            ))}
                            <span className="w-[7px]" />
                          </div>
                        </div>
                        {resources.map((resource) => (
                          <HourBars key={resource.name} resource={resource} selected={selected.includes(resource.name)} />
                        ))}
                      </div>
                      <div className="w-[22px] shrink-0 border-l-2 border-[#ececec] bg-[#fbfbfb] pt-2">
                        <div className="ml-1 h-[730px] w-[11px] rounded-full bg-[#c3c3c3]" />
                      </div>
                    </div>
                  </div>

                  <div className="flex min-h-0 min-w-0 flex-col">
                    <div className="flex h-[74px] shrink-0 items-center border-t-2 border-b-3 border-t-[#d6d6d6] border-b-[#b9b9b7] bg-[#e8e8e8] pl-3 text-[#333333]">
                      <button type="button" aria-label="Map document" className="mr-5"><Sheet icon={FileCog} className="h-8 w-6" /></button>
                      <button type="button" aria-label="Refresh map" className="mr-[11px]"><Sheet icon={RefreshCw} className="h-8 w-6" /></button>
                      <button type="button" aria-label="Show pins" className="flex h-[58px] w-11 items-center justify-center border-y border-[#c0c0c0] bg-white text-black">
                        <Sheet icon={PinSolid} className="h-9 w-6" />
                      </button>
                      <button type="button" aria-label="Labor" className="ml-2.5"><Sheet icon={Person} className="h-8 w-6" /></button>
                      <button type="button" aria-label="Labor options" className="ml-3.5"><Sheet icon={ChevronDown} className="h-6 w-5" /></button>
                      <button type="button" aria-label="Assets" className="ml-4 pt-2"><Sheet icon={Tower} className="h-10 w-7" /></button>
                    </div>
                    <div className="relative min-h-0 flex-1 overflow-hidden">
                      <DispatchMap />
                      <div className="absolute top-[62px] left-10 flex h-[125px] w-[46px] flex-col rounded-lg border-2 border-[#8c8c8c] bg-[#dbdfe3]">
                        <button type="button" aria-label="Zoom map in" className="flex flex-1 items-center justify-center border-b-2 border-[#9a9a9a]">
                          <svg viewBox="0 0 20 26" className="h-[26px] w-5" stroke="#444" strokeWidth="2"><path d="M1 13h18M10 1v24" /></svg>
                        </button>
                        <button type="button" aria-label="Zoom map out" className="flex flex-1 items-center justify-center">
                          <svg viewBox="0 0 20 26" className="h-[26px] w-5" stroke="#444" strokeWidth="3"><path d="M1 13h18" /></svg>
                        </button>
                      </div>
                      <div className="absolute inset-x-0 bottom-0 flex h-[34px] flex-col overflow-hidden border-t-2 border-[#9b9b98] pl-1 whitespace-nowrap text-[#333333]">
                        <p className="h-3 shrink-0 leading-[2px]">[20:21:47.535] Sending request to World Topographic Map</p>
                        <p className="shrink-0 leading-[22px]">[20:21:47.668] World Topographic Map layer was loaded (1/2)</p>
                      </div>
                    </div>
                  </div>
                </div>
              </section>
            </div>
          </main>
        </div>
      </div>
    </div>
  );
};

export default App;
